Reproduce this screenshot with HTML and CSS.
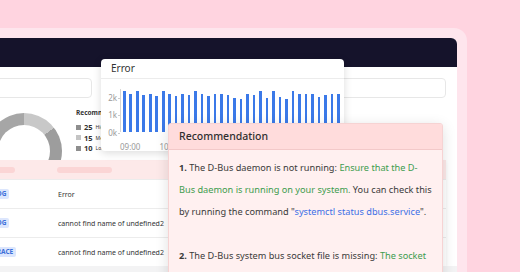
FILE: index.html
```html
<!DOCTYPE html>
<html lang="en">
<head>
<meta charset="UTF-8">
<title>Log insights</title>
<link rel="stylesheet" href="styles.css">
</head>
<body>
<div class="stage">
    <div class="frame">
        <div class="app">
            <div class="topbar"></div>
            <div class="content">
                <div class="filters">
                    <div class="field search"></div>
                    <div class="field range"></div>
                </div>
                <div class="summary">
                    <div class="donut"></div>
                    <div class="legend">
                        <div class="legend-title">Recommendations</div>
                        <div class="legend-item"><span class="sq dark"></span><b>25</b> High</div>
                        <div class="legend-item"><span class="sq light"></span><b>15</b> Medium</div>
                        <div class="legend-item"><span class="sq dark"></span><b>10</b> Low</div>
                    </div>
                </div>
                <div class="table">
                    <div class="row head">
                        <div class="col-level"><span class="ph short"></span></div>
                        <div class="col-msg"><span class="ph long"></span></div>
                    </div>
                    <div class="row">
                        <div class="col-level"><span class="badge">LOG</span></div>
                        <div class="col-msg">Error</div>
                    </div>
                    <div class="row">
                        <div class="col-level"><span class="badge">LOG</span></div>
                        <div class="col-msg">cannot find name of undefined2</div>
                    </div>
                    <div class="row">
                        <div class="col-level"><span class="badge">TRACE</span></div>
                        <div class="col-msg">cannot find name of undefined2</div>
                    </div>
                </div>
                <div class="table-foot"></div>
            </div>
        </div>
    </div>

    <div class="popup error-card">
        <div class="popup-head">Error</div>
        <div class="chart">
            <div class="y-axis">
                <span>2k</span>
                <span>1k</span>
                <span>0k</span>
            </div>
            <div class="plot">
                <i style="height:41px"></i><i style="height:38px"></i><i style="height:41px"></i><i style="height:37px"></i>
                <i style="height:38px"></i><i style="height:36px"></i><i style="height:41px"></i><i style="height:38px"></i>
                <i style="height:36px"></i><i style="height:38px"></i><i style="height:37px"></i><i style="height:41px"></i>
                <i style="height:38px"></i><i style="height:36px"></i><i style="height:38px"></i><i style="height:38px"></i>
                <i style="height:37px"></i><i style="height:34px"></i><i style="height:33px"></i><i style="height:38px"></i>
                <i style="height:37px"></i><i style="height:41px"></i><i style="height:34px"></i><i style="height:41px"></i>
                <i style="height:35px"></i><i style="height:33px"></i><i style="height:41px"></i><i style="height:38px"></i>
                <i style="height:38px"></i><i style="height:38px"></i><i style="height:35px"></i><i style="height:37px"></i>
                <i style="height:38px"></i><i style="height:38px"></i>
            </div>
        </div>
        <div class="x-axis">
            <span>09:00</span><span>10:00</span><span>11:00</span><span>12:00</span><span>13:00</span>
        </div>
    </div>

    <div class="popup reco-card">
        <div class="reco-head">Recommendation</div>
        <div class="reco-body">
            <p><b>1.</b> The D-Bus daemon is not running: <span class="ok">Ensure that the D-Bus daemon is running on your system.</span> You can check this by running the command "<span class="cmd">systemctl status dbus.service</span>".</p>
            <p><b>2.</b> The D-Bus system bus socket file is missing: <span class="ok">The socket file should be located at /var/run/dbus/system_bus_socket.</span></p>
        </div>
    </div>
</div>
</body>
</html>
```

FILE: styles.css
```css
body, html {
    margin: 0;
    padding: 0;
    font-family: "Noto Sans", "Open Sans", sans-serif;
    background-color: #ffd4e0;
    overflow: hidden;
}
.stage {
    position: relative;
    width: 520px;
    height: 272px;
    padding-top: 28px;
    box-sizing: border-box;
    overflow: hidden;
}
.frame {
    width: 507px;
    height: 244px;
    margin-left: -40px;
    padding: 10px 10px 0 10px;
    box-sizing: border-box;
    background-color: #fee5ed;
    border-radius: 0 13px 0 0;
}
.app {
    height: 100%;
    display: flex;
    flex-direction: column;
    background-color: #fff;
    border-radius: 0 6px 0 0;
    overflow: hidden;
}
.topbar {
    height: 29px;
    background-color: #15132b;
}
.content {
    flex: 1;
    display: flex;
    flex-direction: column;
    padding: 11px 11px 0 10px;
}
.filters {
    display: flex;
    height: 20px;
}
.field {
    height: 20px;
    box-sizing: border-box;
    border: 1px solid #e7e7e7;
    border-radius: 4px;
}
.field.search {
    width: 112px;
}
.field.range {
    width: 196px;
    margin-left: auto;
}
.summary {
    display: flex;
    height: 62px;
    overflow: hidden;
}
.donut {
    position: relative;
    flex: none;
    width: 76px;
    height: 76px;
    margin: 15px 0 0 6px;
    border-radius: 50%;
    background: conic-gradient(#c8c8c8 0 52deg, #9d9d9d 52deg 190deg, #a6a6a6 190deg 360deg);
}
.donut::after {
    content: "";
    position: absolute;
    inset: 12px;
    border-radius: 50%;
    background-color: #fff;
}
.legend {
    margin: 10px 0 0 14px;
    color: #333;
    white-space: nowrap;
}
.legend-title {
    font-size: 6.5px;
    font-weight: 700;
    line-height: 9px;
    margin-bottom: 5px;
}
.legend-item {
    display: flex;
    align-items: center;
    gap: 2px;
    font-size: 5px;
    line-height: 10.5px;
}
.legend-item b {
    font-size: 7.5px;
    margin-right: 1px;
}
.sq {
    width: 5px;
    height: 5px;
    margin-right: 1px;
}
.sq.dark {
    background-color: #8e8e8e;
}
.sq.light {
    background-color: #c4c4c4;
}
.table {
    display: flex;
    flex-direction: column;
    background-color: #fff;
    box-shadow: 0 2px 4px rgba(0, 0, 0, 0.05);
}
.table-foot {
    flex: 1;
    margin: 0 -11px 0 -10px;
    background-color: #f3f3f4;
}
.row {
    display: flex;
    align-items: center;
    height: 28px;
    border-top: 1px solid #ececec;
    font-size: 7px;
    color: #333;
}
.row.head {
    height: 19px;
    border-top: none;
    background-color: #fde9e9;
}
.col-level {
    width: 78px;
    flex: none;
    padding-left: 10px;
    box-sizing: border-box;
    display: flex;
}
.col-msg {
    white-space: nowrap;
}
.ph {
    display: block;
    height: 6px;
    border-radius: 3px;
    background-color: #fbd5d5;
}
.ph.short {
    width: 25px;
}
.ph.long {
    width: 55px;
    margin-left: -1px;
}
.badge {
    height: 10px;
    line-height: 10px;
    padding: 0 3px;
    border-radius: 2px;
    background-color: #dce6fd;
    color: #3c6fd9;
    font-size: 6.5px;
    font-weight: 700;
}
.popup {
    position: absolute;
    box-sizing: border-box;
}
.error-card {
    left: 101px;
    top: 59px;
    width: 243px;
    height: 92px;
    background-color: #fff;
    border-radius: 4px;
    box-shadow: 0 2px 8px rgba(0, 0, 0, 0.14);
}
.popup-head {
    height: 19px;
    line-height: 19px;
    padding-left: 10px;
    border-bottom: 1px solid #ececec;
    font-size: 10px;
    color: #333;
}
.chart {
    display: flex;
    align-items: flex-start;
    padding: 10px 0 0 6px;
}
.y-axis {
    width: 13px;
    height: 45px;
    margin-top: 3.5px;
    display: flex;
    flex-direction: column;
    justify-content: space-between;
    align-items: flex-end;
    font-size: 8px;
    line-height: 10px;
    color: #9a9a9a;
}
.y-axis span::after {
    content: "";
    display: inline-block;
    width: 2px;
    height: 1px;
    margin-left: 1px;
    vertical-align: middle;
    background-color: #ccc;
}
.plot {
    height: 43px;
    flex: 1;
    display: flex;
    align-items: flex-end;
    gap: 3.9px;
    padding-left: 2px;
    border-left: 1px solid #d6d6d6;
}
.plot i {
    display: block;
    width: 2.6px;
    background-color: #3b79e8;
}
.x-axis {
    display: flex;
    margin: 4px 0 0 19px;
    font-size: 8px;
    line-height: 10px;
    color: #9a9a9a;
}
.x-axis span {
    width: 39.5px;
}
.reco-card {
    left: 168px;
    top: 123px;
    width: 275px;
    height: 170px;
    background-color: #fff0f0;
    border: 1px solid #f6d3d3;
    border-radius: 3px;
    box-shadow: 0 3px 14px rgba(0, 0, 0, 0.13);
    overflow: hidden;
}
.reco-head {
    height: 25px;
    line-height: 25px;
    padding: 0 10px;
    background-color: #ffdcdc;
    border-bottom: 1px solid #f3c9c9;
    font-size: 10.5px;
    font-weight: 500;
    color: #2f2f2f;
}
.reco-body {
    padding: 7px 10px 0 10px;
    font-size: 9.2px;
    line-height: 22px;
    color: #3a3a3a;
}
.reco-body p {
    margin: 0 0 22px 0;
}
.reco-body .ok {
    color: #3d9c4e;
}
.reco-body .cmd {
    color: #3d6fe6;
}
```
